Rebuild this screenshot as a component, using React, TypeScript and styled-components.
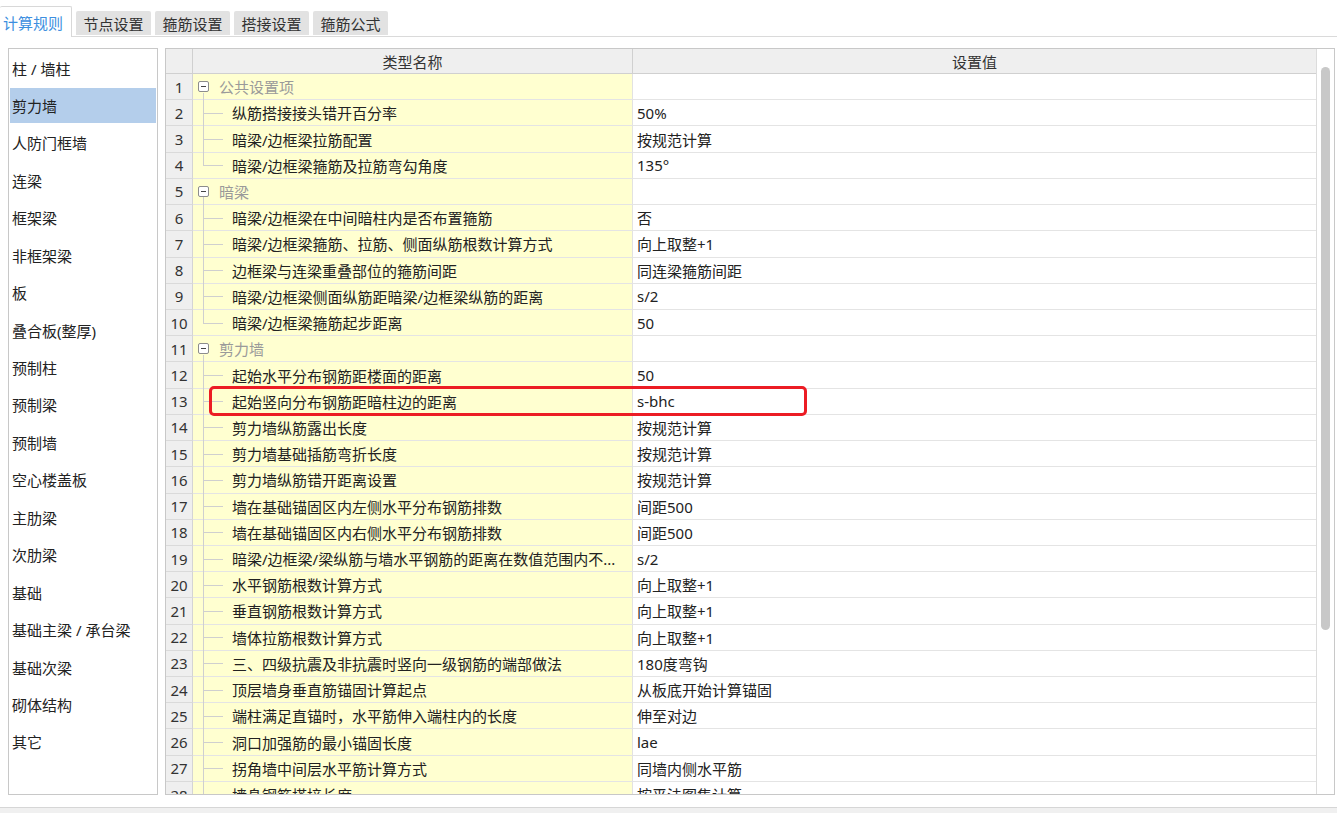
import React from 'react';
import styled, { createGlobalStyle } from 'styled-components';

const GlobalStyle = createGlobalStyle`
  *, *::before, *::after {
    box-sizing: border-box;
  }
  body {
    margin: 0;
    background: #fff;
    font-family: "Noto Sans", "Noto Sans CJK SC", sans-serif;
    font-size: 15px;
    color: #222;
  }
`;

const Window = styled.div`
  display: flex;
  flex-direction: column;
  height: 813px;
  width: 1337px;
  overflow: hidden;
`;

const TabBar = styled.div`
  display: flex;
  align-items: flex-end;
  gap: 4px;
  height: 37px;
  border-bottom: 1px solid #dadada;
`;

const Tab = styled.div<{ $active?: boolean }>`
  display: flex;
  align-items: center;
  justify-content: center;
  width: ${(p) => (p.$active ? '72px' : '75px')};
  height: ${(p) => (p.$active ? '31px' : '24px')};
  margin-bottom: ${(p) => (p.$active ? '-1px' : '1px')};
  padding: ${(p) => (p.$active ? '0 5px 0 0' : '0')};
  background: ${(p) => (p.$active ? '#fff' : '#e2e2e2')};
  border: ${(p) => (p.$active ? '1px solid #d8d8d8' : 'none')};
  border-bottom: none;
  border-left: none;
  border-radius: 2px 2px 0 0;
  color: ${(p) => (p.$active ? '#3d8fe0' : '#333')};
  white-space: nowrap;
`;

const Main = styled.div`
  flex: 1;
  display: flex;
  gap: 7px;
  padding: 11px 2px 12px 8px;
  min-height: 0;
`;

const SideList = styled.div`
  width: 150px;
  flex-shrink: 0;
  border: 1px solid #c8c8c8;
  padding-top: 1.5px;
  overflow: hidden;
`;

const SideItem = styled.div<{ $selected?: boolean }>`
  display: flex;
  align-items: center;
  height: 35px;
  margin: 0 1px 2.44px;
  padding-left: 2px;
  background: ${(p) => (p.$selected ? '#b4ceeb' : 'transparent')};
  white-space: nowrap;
`;

const Grid = styled.div`
  flex: 1;
  display: flex;
  border: 1px solid #c8c8c8;
  min-width: 0;
  overflow: hidden;
`;

const DataArea = styled.div`
  flex: 1;
  min-width: 0;
  overflow: hidden;
`;

const HeaderRow = styled.div`
  display: grid;
  grid-template-columns: 27px 440px 1fr;
  height: 25px;
  background: #efefef;
  border-bottom: 1px solid #d0d0d0;
`;

const HeaderCell = styled.div`
  display: flex;
  align-items: center;
  justify-content: center;
  border-right: 1px solid #d0d0d0;
  color: #333;
  &:last-child {
    border-right: none;
  }
`;

const Row = styled.div`
  display: grid;
  grid-template-columns: 27px 440px 1fr;
  height: 26.23px;
`;

const NumCell = styled.div`
  display: flex;
  align-items: center;
  justify-content: center;
  background: #efefef;
  border-right: 1px solid #d4d4d4;
  border-bottom: 1px solid #dadada;
  color: #333;
`;

const NameCell = styled.div`
  position: relative;
  display: flex;
  align-items: center;
  background: #ffffd0;
  border-right: 1px solid #e2e2e2;
  border-bottom: 1px solid #e4e4e4;
  white-space: nowrap;
  overflow: visible;
`;

const ValueCell = styled.div`
  display: flex;
  align-items: center;
  padding-left: 4px;
  border-bottom: 1px solid #e4e4e4;
  white-space: nowrap;
`;

const Toggle = styled.span`
  position: relative;
  flex-shrink: 0;
  width: 11px;
  height: 11px;
  margin-left: 5px;
  border: 1px solid #8c8c8c;
  border-radius: 2px;
  background: #fff;
  &::before {
    content: '';
    position: absolute;
    left: 2px;
    right: 2px;
    top: 4px;
    height: 1px;
    background: #444;
  }
`;

const GroupStem = styled.span`
  position: absolute;
  left: 10px;
  top: calc(50% + 6px);
  bottom: -1px;
  width: 1px;
  background: #cfcfcf;
`;

const GroupLabel = styled.span`
  margin-left: 10px;
  color: #9a9a9a;
`;

const Branch = styled.span<{ $last?: boolean }>`
  position: relative;
  align-self: stretch;
  flex-shrink: 0;
  width: 39px;
  &::before {
    content: '';
    position: absolute;
    left: 10px;
    top: 0;
    bottom: ${(p) => (p.$last ? '50%' : '-1px')};
    width: 1px;
    background: #cfcfcf;
  }
  &::after {
    content: '';
    position: absolute;
    left: 10px;
    top: 50%;
    width: 20px;
    height: 1px;
    background: #cfcfcf;
  }
`;

const ItemText = styled.span`
  overflow: hidden;
  text-overflow: ellipsis;
`;

const Highlight = styled.span`
  position: absolute;
  left: 16px;
  top: -3px;
  width: 598px;
  height: 30px;
  border: 3px solid #ec1c24;
  border-radius: 5px;
  pointer-events: none;
  z-index: 2;
`;

const ScrollTrack = styled.div`
  width: 18px;
  flex-shrink: 0;
  border-left: 1px solid #dcdcdc;
  background: #fff;
`;

const ScrollThumb = styled.div`
  width: 9px;
  height: 563px;
  margin: 18px 0 0 4px;
  border-radius: 5px;
  background: #c8c8c8;
`;

const StatusBar = styled.div`
  height: 6px;
  flex-shrink: 0;
  background: #f0f0f0;
  border-top: 1px solid #d6d6d6;
`;

type Item =
  | { group: string }
  | { name: string; value: string; last?: boolean; mark?: boolean };

const items: Item[] = [
  { group: '公共设置项' },
  { name: '纵筋搭接接头错开百分率', value: '50%' },
  { name: '暗梁/边框梁拉筋配置', value: '按规范计算' },
  { name: '暗梁/边框梁箍筋及拉筋弯勾角度', value: '135°', last: true },
  { group: '暗梁' },
  { name: '暗梁/边框梁在中间暗柱内是否布置箍筋', value: '否' },
  { name: '暗梁/边框梁箍筋、拉筋、侧面纵筋根数计算方式', value: '向上取整+1' },
  { name: '边框梁与连梁重叠部位的箍筋间距', value: '同连梁箍筋间距' },
  { name: '暗梁/边框梁侧面纵筋距暗梁/边框梁纵筋的距离', value: 's/2' },
  { name: '暗梁/边框梁箍筋起步距离', value: '50', last: true },
  { group: '剪力墙' },
  { name: '起始水平分布钢筋距楼面的距离', value: '50' },
  { name: '起始竖向分布钢筋距暗柱边的距离', value: 's-bhc', mark: true },
  { name: '剪力墙纵筋露出长度', value: '按规范计算' },
  { name: '剪力墙基础插筋弯折长度', value: '按规范计算' },
  { name: '剪力墙纵筋错开距离设置', value: '按规范计算' },
  { name: '墙在基础锚固区内左侧水平分布钢筋排数', value: '间距500' },
  { name: '墙在基础锚固区内右侧水平分布钢筋排数', value: '间距500' },
  { name: '暗梁/边框梁/梁纵筋与墙水平钢筋的距离在数值范围内不...', value: 's/2' },
  { name: '水平钢筋根数计算方式', value: '向上取整+1' },
  { name: '垂直钢筋根数计算方式', value: '向上取整+1' },
  { name: '墙体拉筋根数计算方式', value: '向上取整+1' },
  { name: '三、四级抗震及非抗震时竖向一级钢筋的端部做法', value: '180度弯钩' },
  { name: '顶层墙身垂直筋锚固计算起点', value: '从板底开始计算锚固' },
  { name: '端柱满足直锚时，水平筋伸入端柱内的长度', value: '伸至对边' },
  { name: '洞口加强筋的最小锚固长度', value: 'lae' },
  { name: '拐角墙中间层水平筋计算方式', value: '同墙内侧水平筋' },
  { name: '墙身钢筋搭接长度', value: '按平法图集计算' },
];

const tabs = ['计算规则', '节点设置', '箍筋设置', '搭接设置', '箍筋公式'];

const sideItems = [
  '柱 / 墙柱',
  '剪力墙',
  '人防门框墙',
  '连梁',
  '框架梁',
  '非框架梁',
  '板',
  '叠合板(整厚)',
  '预制柱',
  '预制梁',
  '预制墙',
  '空心楼盖板',
  '主肋梁',
  '次肋梁',
  '基础',
  '基础主梁 / 承台梁',
  '基础次梁',
  '砌体结构',
  '其它',
];

export default function App() {
  return (
    <>
      <GlobalStyle />
      <Window>
        <TabBar>
          {tabs.map((t, i) => (
            <Tab key={t} $active={i === 0}>
              {t}
            </Tab>
          ))}
        </TabBar>
        <Main>
          <SideList>
            {sideItems.map((s, i) => (
              <SideItem key={s} $selected={i === 1}>
                {s}
              </SideItem>
            ))}
          </SideList>
          <Grid>
            <DataArea>
              <HeaderRow>
                <HeaderCell />
                <HeaderCell>类型名称</HeaderCell>
                <HeaderCell>设置值</HeaderCell>
              </HeaderRow>
              {items.map((it, i) => (
                <Row key={i}>
                  <NumCell>{i + 1}</NumCell>
                  {'group' in it ? (
                    <>
                      <NameCell>
                        <Toggle />
                        <GroupStem />
                        <GroupLabel>{it.group}</GroupLabel>
                      </NameCell>
                      <ValueCell />
                    </>
                  ) : (
                    <>
                      <NameCell>
                        <Branch $last={it.last} />
                        <ItemText>{it.name}</ItemText>
                        {it.mark && <Highlight />}
                      </NameCell>
                      <ValueCell>{it.value}</ValueCell>
                    </>
                  )}
                </Row>
              ))}
            </DataArea>
            <ScrollTrack>
              <ScrollThumb />
            </ScrollTrack>
          </Grid>
        </Main>
        <StatusBar />
      </Window>
    </>
  );
}
